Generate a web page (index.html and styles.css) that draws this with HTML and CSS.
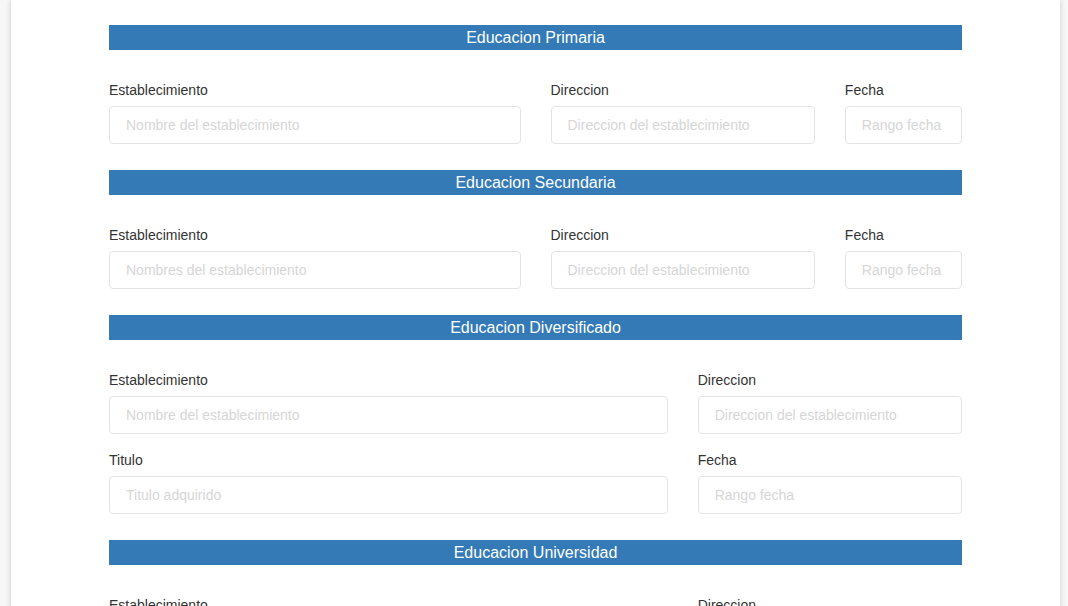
FILE: index.html
```html
<!DOCTYPE html>
<html lang="es">
<head>
<meta charset="utf-8">
<title>Educacion</title>
<link rel="stylesheet" href="styles.css">
</head>
<body>
<div class="card">
  <section class="section">
    <h3 class="bar">Educacion Primaria</h3>
    <div class="row">
      <div class="field s6"><label>Establecimiento</label><input placeholder="Nombre del establecimiento"></div>
      <div class="field s4"><label>Direccion</label><input placeholder="Direccion del establecimiento"></div>
      <div class="field s2"><label>Fecha</label><input placeholder="Rango fecha"></div>
    </div>
  </section>
  <section class="section">
    <h3 class="bar">Educacion Secundaria</h3>
    <div class="row">
      <div class="field s6"><label>Establecimiento</label><input placeholder="Nombres del establecimiento"></div>
      <div class="field s4"><label>Direccion</label><input placeholder="Direccion del establecimiento"></div>
      <div class="field s2"><label>Fecha</label><input placeholder="Rango fecha"></div>
    </div>
  </section>
  <section class="section">
    <h3 class="bar">Educacion Diversificado</h3>
    <div class="row">
      <div class="field s8"><label>Establecimiento</label><input placeholder="Nombre del establecimiento"></div>
      <div class="field s4"><label>Direccion</label><input placeholder="Direccion del establecimiento"></div>
      <div class="field s8"><label>Titulo</label><input placeholder="Titulo adquirido"></div>
      <div class="field s4"><label>Fecha</label><input placeholder="Rango fecha"></div>
    </div>
  </section>
  <section class="section">
    <h3 class="bar">Educacion Universidad</h3>
    <div class="row">
      <div class="field s8"><label>Establecimiento</label><input placeholder="Nombre del establecimiento"></div>
      <div class="field s4"><label>Direccion</label><input placeholder="Direccion del establecimiento"></div>
    </div>
  </section>
</div>
</body>
</html>
```
FILE: styles.css
```css
html, body {
  margin: 0;
  padding: 0;
}
body {
  background: #f7f7f7;
  font-family: "Liberation Sans", Arial, sans-serif;
  color: #333;
  overflow: hidden;
}
.card {
  margin-left: 11px;
  width: 1049px;
  box-sizing: border-box;
  padding: 25px 98px 40px;
  background: #fff;
  box-shadow: 0 0 6px rgba(0, 0, 0, 0.18);
  min-height: 700px;
}
.section {
  margin-bottom: 26px;
}
.bar {
  margin: 0;
  height: 25px;
  line-height: 25px;
  background: #337ab7;
  color: #fff;
  font-size: 16px;
  font-weight: normal;
  text-align: center;
}
.row {
  display: grid;
  grid-template-columns: repeat(12, 1fr);
  column-gap: 30px;
  row-gap: 16px;
  margin-top: 30px;
}
.s2 { grid-column: span 2; }
.s4 { grid-column: span 4; }
.s6 { grid-column: span 6; }
.s8 { grid-column: span 8; }
.field {
  display: flex;
  flex-direction: column;
}
.field label {
  font-size: 14px;
  line-height: 20px;
  margin-bottom: 6px;
  color: #333;
}
.field input {
  box-sizing: border-box;
  height: 38px;
  width: 100%;
  border: 1px solid #e3e3e3;
  border-radius: 4px;
  padding: 0 16px;
  font-family: "Liberation Sans", Arial, sans-serif;
  font-size: 14px;
  color: #555;
  background: #fff;
  outline: none;
}
.field input::placeholder {
  color: #d6d6d6;
}
```
